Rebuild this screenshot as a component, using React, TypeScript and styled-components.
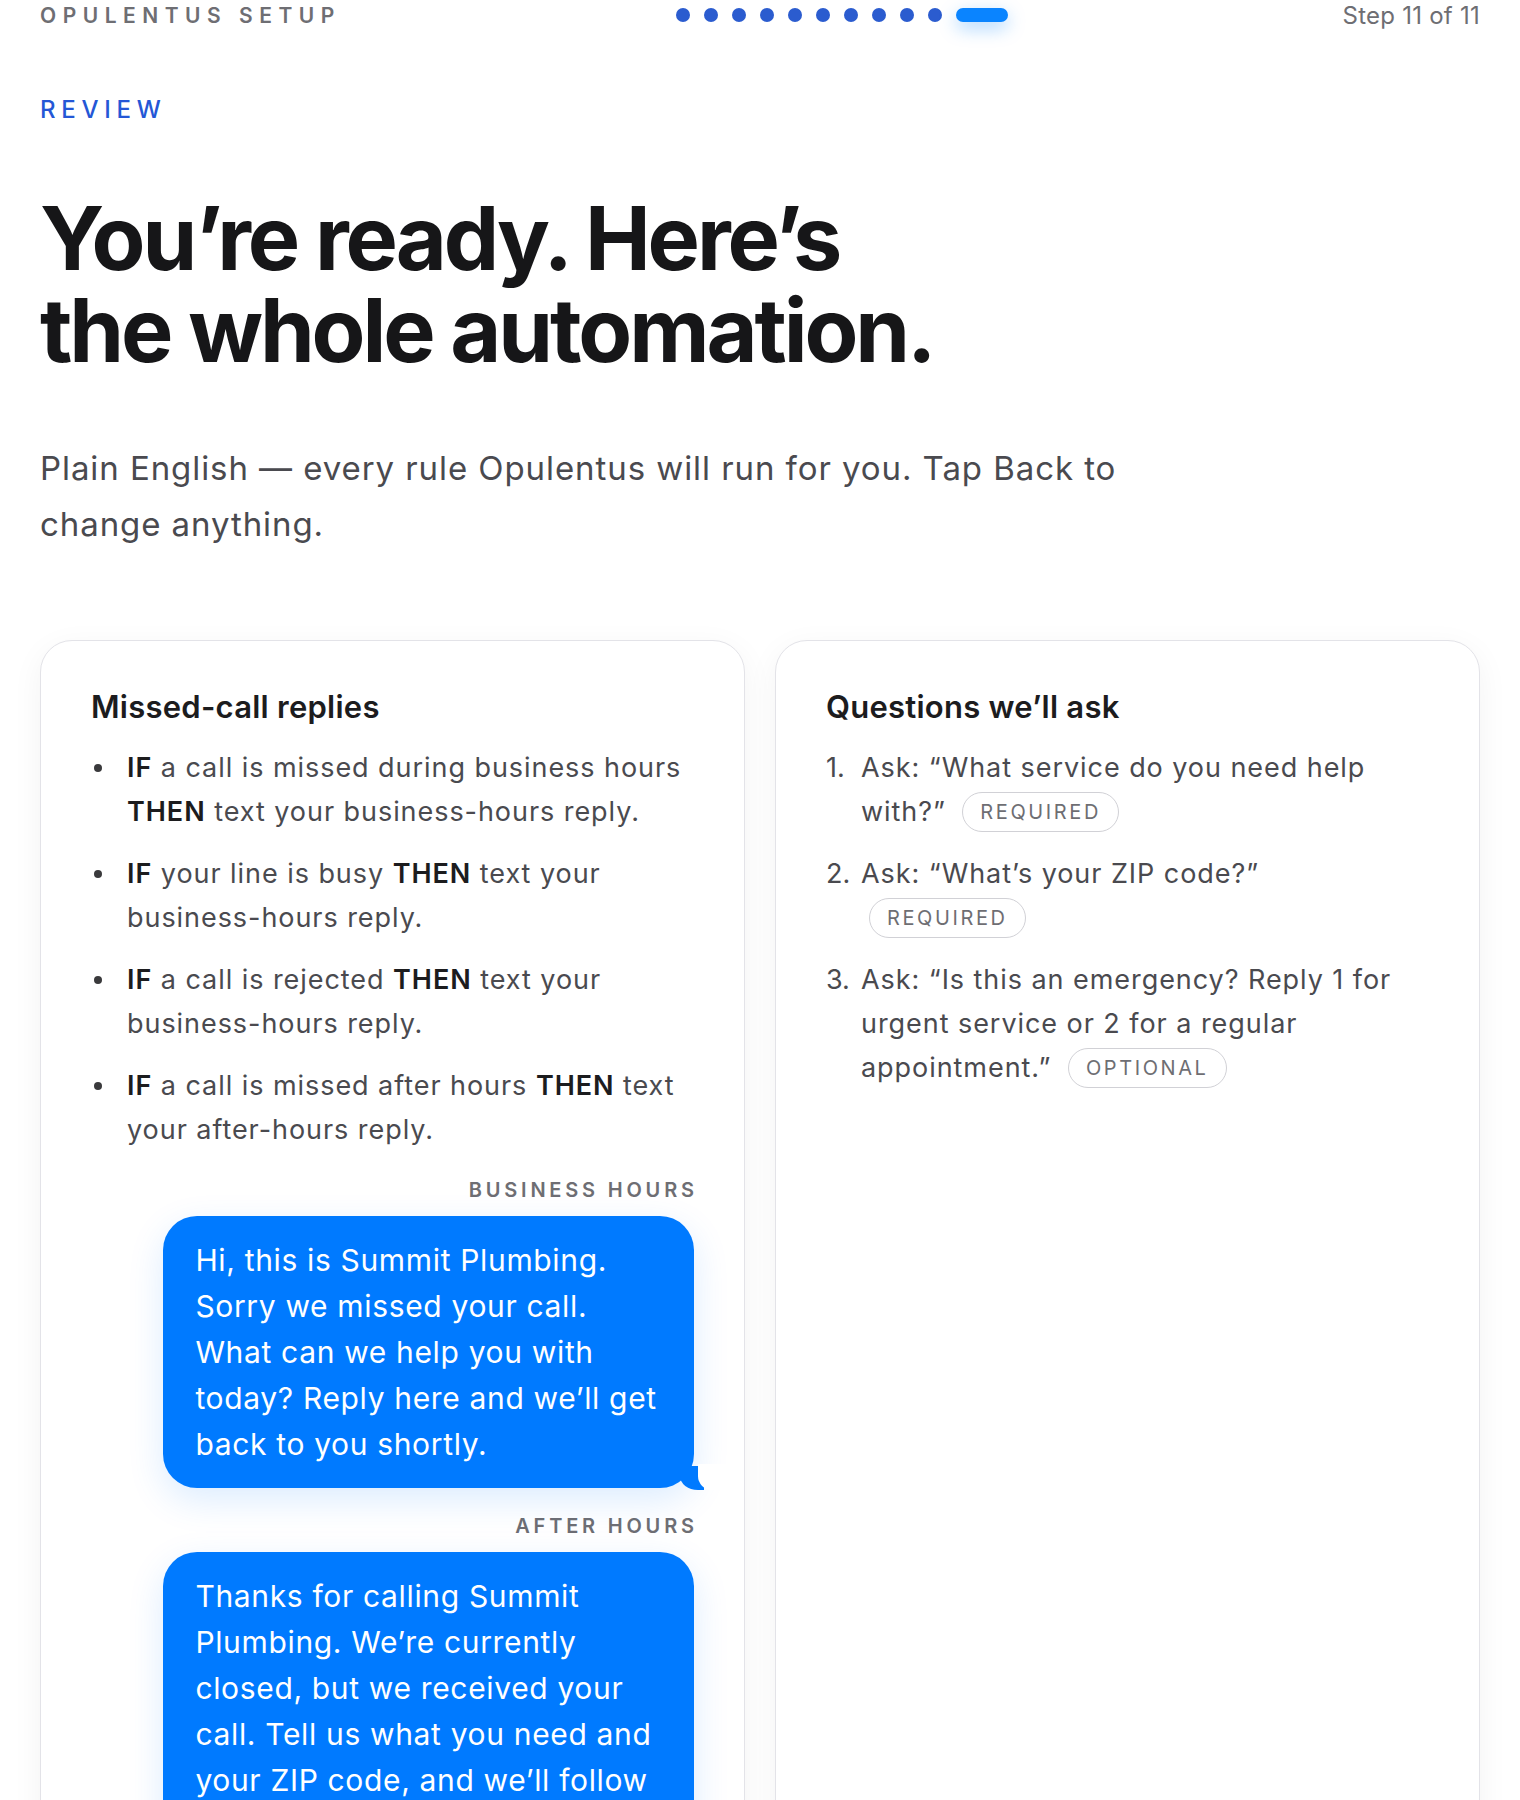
import React from 'react';
import styled, { createGlobalStyle } from 'styled-components';

const GlobalStyle = createGlobalStyle`
  html, body {
    margin: 0;
    padding: 0;
    background: #ffffff;
  }
  body {
    font-family: Inter, "Noto Sans", "Liberation Sans", sans-serif;
    color: #1c1c1e;
    -webkit-font-smoothing: antialiased;
  }
  * {
    box-sizing: border-box;
  }
`;

const rules = [
  { cond: 'a call is missed during business hours', then: 'text your business-hours reply.' },
  { cond: 'your line is busy', then: 'text your business-hours reply.' },
  { cond: 'a call is rejected', then: 'text your business-hours reply.' },
  { cond: 'a call is missed after hours', then: 'text your after-hours reply.' },
];

const questions = [
  { text: 'Ask: “What service do you need help with?”', tag: 'REQUIRED' },
  { text: 'Ask: “What’s your ZIP code?”', tag: 'REQUIRED' },
  {
    text: 'Ask: “Is this an emergency? Reply 1 for urgent service or 2 for a regular appointment.”',
    tag: 'OPTIONAL',
  },
];

const replies = [
  {
    label: 'BUSINESS HOURS',
    text: 'Hi, this is Summit Plumbing. Sorry we missed your call. What can we help you with today? Reply here and we’ll get back to you shortly.',
  },
  {
    label: 'AFTER HOURS',
    text: 'Thanks for calling Summit Plumbing. We’re currently closed, but we received your call. Tell us what you need and your ZIP code, and we’ll follow up first thing in the morning.',
  },
];

const TOTAL_STEPS = 11;

const App = () => {
  return (
    <>
      <GlobalStyle />
      <Page>
        <Header>
          <Brand>OPULENTUS SETUP</Brand>
          <Progress>
            {Array.from({ length: TOTAL_STEPS }).map((_, i) =>
              i === TOTAL_STEPS - 1 ? <ActiveStep key={i} /> : <StepDot key={i} />
            )}
          </Progress>
          <StepCount>Step 11 of 11</StepCount>
        </Header>

        <Eyebrow>REVIEW</Eyebrow>
        <Headline>
          You’re ready. Here’s
          <br />
          the whole automation.
        </Headline>
        <Lead>
          Plain English — every rule Opulentus will run for you. Tap Back to
          <br />
          change anything.
        </Lead>

        <Cards>
          <Card>
            <CardTitle>Missed-call replies</CardTitle>
            <RuleList>
              {rules.map((r, i) => (
                <RuleItem key={i}>
                  <Dot />
                  <span>
                    <b>IF</b> {r.cond} <b>THEN</b> {r.then}
                  </span>
                </RuleItem>
              ))}
            </RuleList>
            {replies.map((m) => (
              <ReplyGroup key={m.label}>
                <ReplyLabel>{m.label}</ReplyLabel>
                <Bubble>{m.text}</Bubble>
              </ReplyGroup>
            ))}
          </Card>

          <Card>
            <CardTitle>Questions we’ll ask</CardTitle>
            <QuestionList>
              {questions.map((q, i) => (
                <QuestionItem key={i}>
                  <Num>{i + 1}.</Num>
                  <span>
                    {q.text} <Tag>{q.tag}</Tag>
                  </span>
                </QuestionItem>
              ))}
            </QuestionList>
          </Card>
        </Cards>
      </Page>
    </>
  );
};

const Page = styled.div`
  padding: 0 40px 80px;
`;

const Header = styled.header`
  display: flex;
  align-items: center;
  justify-content: space-between;
  height: 30px;
`;

const Brand = styled.div`
  font-size: 21px;
  font-weight: 600;
  letter-spacing: 0.31em;
  color: #6e6e73;
`;

const Progress = styled.div`
  display: flex;
  align-items: center;
  gap: 14px;
`;

const StepDot = styled.span`
  width: 14px;
  height: 14px;
  border-radius: 50%;
  background: #2b5ccf;
`;

const ActiveStep = styled.span`
  width: 52px;
  height: 14px;
  border-radius: 7px;
  background: #0a84ff;
  box-shadow: 0 6px 18px rgba(10, 132, 255, 0.35);
`;

const StepCount = styled.div`
  font-size: 24px;
  letter-spacing: 0.01em;
  color: #6e6e73;
`;

const Eyebrow = styled.div`
  margin-top: 65px;
  font-size: 24px;
  line-height: 29px;
  font-weight: 500;
  letter-spacing: 0.24em;
  color: #2457d6;
`;

const Headline = styled.h1`
  margin: 68px 0 0;
  font-size: 88px;
  line-height: 92px;
  font-weight: 700;
  letter-spacing: -0.035em;
  color: #161618;
`;

const Lead = styled.p`
  margin: 64px 0 0;
  font-size: 33px;
  line-height: 56px;
  letter-spacing: 0.028em;
  color: #4a4a4f;
`;

const Cards = styled.div`
  display: grid;
  grid-template-columns: 1fr 1fr;
  gap: 30px;
  margin-top: 88px;
  align-items: stretch;
`;

const Card = styled.section`
  display: flex;
  flex-direction: column;
  background: #ffffff;
  border: 1px solid #e3e3e8;
  border-radius: 32px;
  padding: 46px 50px 60px;
  box-shadow: 0 8px 32px rgba(0, 0, 0, 0.05);
`;

const CardTitle = styled.h2`
  margin: 0;
  font-size: 31px;
  line-height: 39px;
  font-weight: 600;
  letter-spacing: 0.008em;
  color: #1c1c1e;
`;

const RuleList = styled.ul`
  list-style: none;
  margin: 20px 0 0;
  padding: 0;
  display: flex;
  flex-direction: column;
  gap: 18px;
`;

const RuleItem = styled.li`
  display: grid;
  grid-template-columns: 36px 1fr;
  font-size: 27px;
  line-height: 44px;
  letter-spacing: 0.035em;
  color: #4a4a4f;
  b {
    font-weight: 600;
    color: #1c1c1e;
  }
`;

const Dot = styled.span`
  width: 8px;
  height: 8px;
  margin: 18px 0 0 3px;
  border-radius: 50%;
  background: #3a3a3c;
`;

const ReplyGroup = styled.div`
  display: flex;
  flex-direction: column;
  align-items: flex-end;
  margin-top: 26px;
`;

const ReplyLabel = styled.div`
  font-size: 20px;
  line-height: 24px;
  font-weight: 600;
  letter-spacing: 0.19em;
  margin-right: -0.19em;
  color: #6e6e73;
  margin-bottom: 14px;
`;

const Bubble = styled.div`
  position: relative;
  max-width: 88%;
  padding: 21px 32px;
  border-radius: 34px;
  background: #007aff;
  color: #ffffff;
  font-size: 30px;
  line-height: 46px;
  letter-spacing: 0.022em;
  box-shadow: 0 12px 36px rgba(0, 122, 255, 0.14);

  &::before {
    content: '';
    position: absolute;
    right: -10px;
    bottom: -2px;
    width: 24px;
    height: 24px;
    background: #007aff;
    border-bottom-left-radius: 18px 14px;
  }
  &::after {
    content: '';
    position: absolute;
    right: -34px;
    bottom: -2px;
    width: 30px;
    height: 26px;
    background: #ffffff;
    border-bottom-left-radius: 14px;
  }
`;

const QuestionList = styled.ol`
  list-style: none;
  margin: 20px 0 0;
  padding: 0;
  display: flex;
  flex-direction: column;
  gap: 18px;
`;

const QuestionItem = styled.li`
  display: grid;
  grid-template-columns: 35px 1fr;
  font-size: 27px;
  line-height: 44px;
  letter-spacing: 0.035em;
  color: #4a4a4f;
`;

const Num = styled.span`
  color: #4a4a4f;
  letter-spacing: 0;
`;

const Tag = styled.span`
  display: inline-flex;
  align-items: center;
  height: 40px;
  margin-left: 8px;
  padding: 0 17px;
  border: 1.5px solid #d1d1d6;
  border-radius: 999px;
  font-size: 20px;
  line-height: 1;
  letter-spacing: 0.13em;
  color: #6e6e73;
  vertical-align: middle;
  position: relative;
  top: -2px;
`;

export default App;
